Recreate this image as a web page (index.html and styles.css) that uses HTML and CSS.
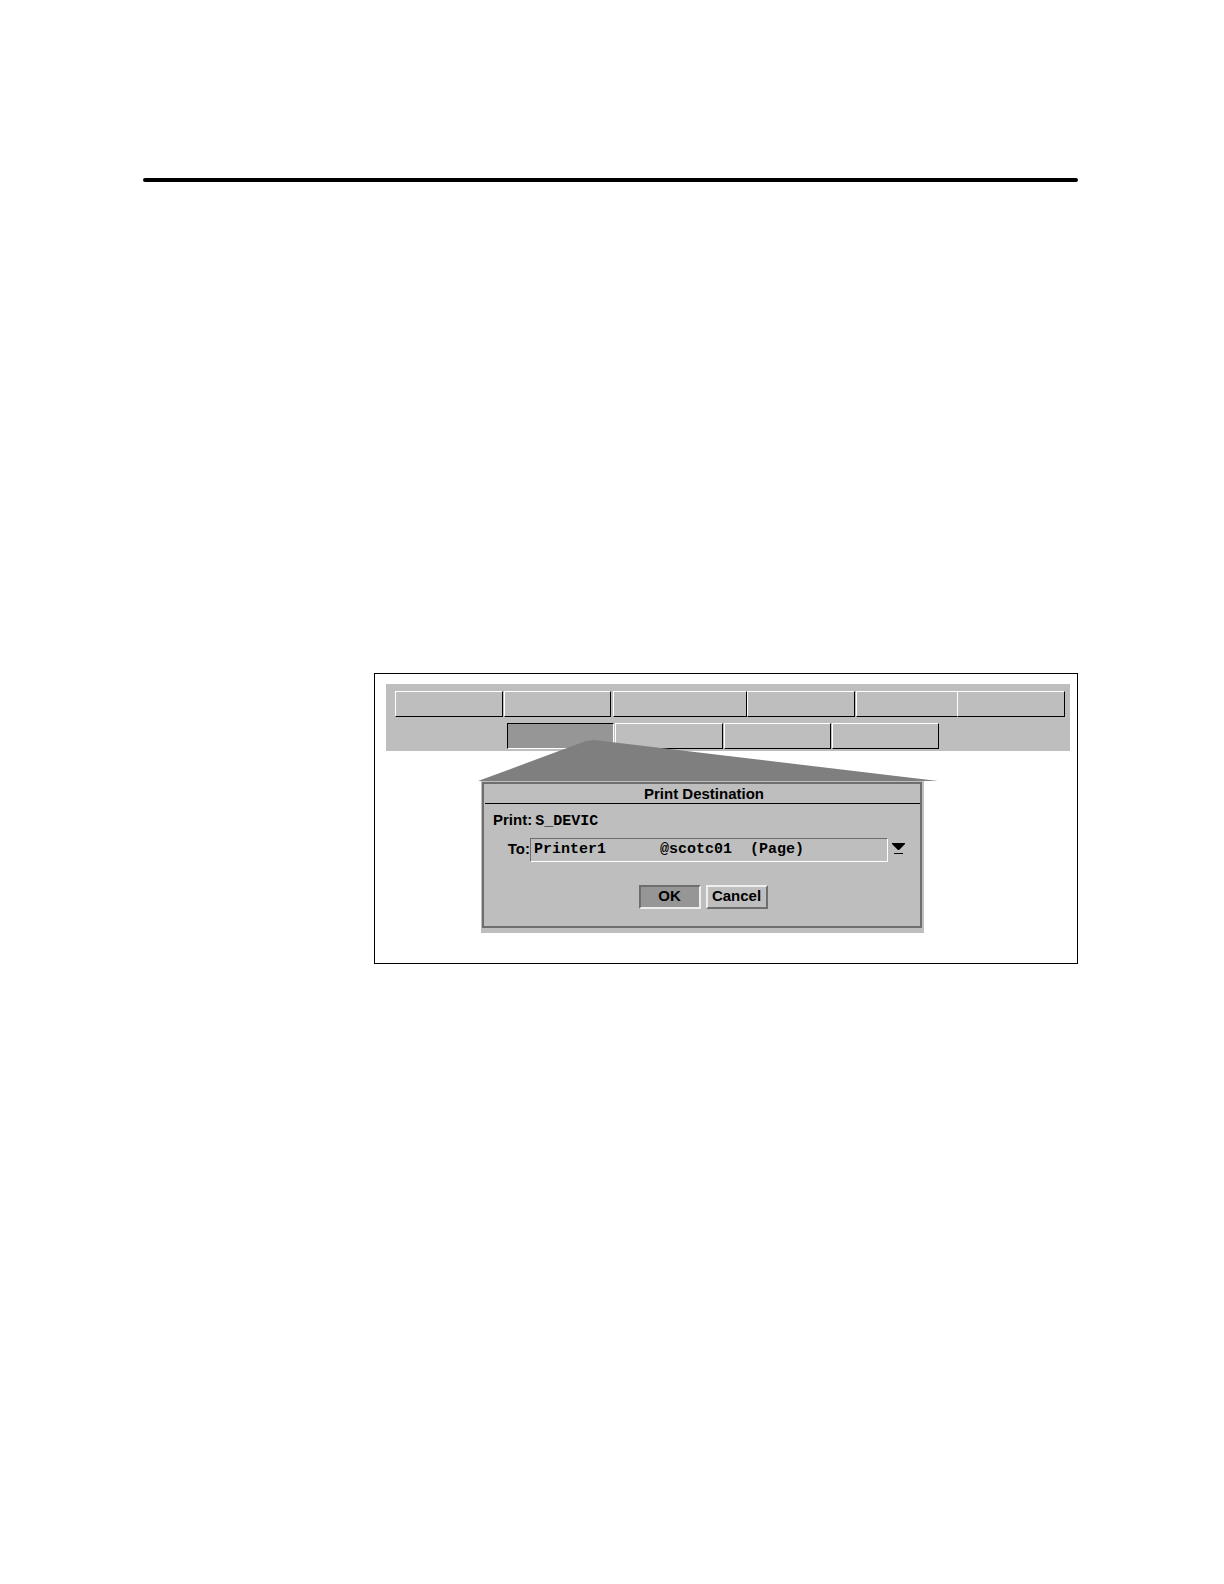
FILE: index.html
```
<!DOCTYPE html>
<html lang="en">

<head>
    <meta charset="utf-8">
    <title>Print Destination</title>
    <link rel="stylesheet" href="styles.css">
</head>

<body>
    <hr class="rule">
    <main class="figure">
        <div class="toolbar">
            <div class="row">
                <button type="button" class="tool" aria-label="Tool 1"></button>
                <button type="button" class="tool group-end" aria-label="Tool 2"></button>
                <button type="button" class="tool wide joined" aria-label="Tool 3"></button>
                <button type="button" class="tool" aria-label="Tool 4"></button>
                <button type="button" class="tool short joined" aria-label="Tool 5"></button>
                <button type="button" class="tool joined" aria-label="Tool 6"></button>
            </div>
            <div class="row second">
                <button type="button" class="tool pressed" aria-label="Print"></button>
                <button type="button" class="tool" aria-label="Tool 7"></button>
                <button type="button" class="tool" aria-label="Tool 8"></button>
                <button type="button" class="tool" aria-label="Tool 9"></button>
            </div>
        </div>

        <div class="popup">
            <!-- pointer from the pressed button to the dialog -->
            <svg class="pointer" viewBox="0 0 460 41" preserveAspectRatio="none" aria-hidden="true">
                <path d="M0 41 L108 1 L116 0 L460 41 Z" fill="#7f7f7f" />
            </svg>
            <form class="dialog">
                <h1>Print Destination</h1>
                <div class="source">
                    <span>Print:</span>
                    <output>S_DEVIC</output>
                </div>
                <div class="destination">
                    <label for="printer">To:</label>
                    <input type="text" id="printer" value="Printer1      @scotc01  (Page)">
                    <button type="button" class="pick" aria-label="Choose printer">
                        <svg width="13" height="12" viewBox="0 0 13 12">
                            <path d="M0 0 H13 V1 L7 7 H6 L0 1 Z M2 10 H11 V11 H2 Z" />
                        </svg>
                    </button>
                </div>
                <div class="actions">
                    <button type="button" class="action pressed">OK</button>
                    <button type="button" class="action">Cancel</button>
                </div>
            </form>
        </div>
    </main>
</body>

</html>
```
FILE: styles.css
```
* {
    box-sizing: border-box;
}

body {
    margin: 0;
    padding: 178px 146px 40px 143px;
    background: #fff;
    color: #000;
    font: bold 15px/20px "Liberation Sans", Arial, sans-serif;
}

button,
input {
    margin: 0;
    padding: 0;
    font: inherit;
    color: inherit;
    border-radius: 0;
}

.rule {
    height: 4px;
    margin: 0;
    border: none;
    border-radius: 2px;
    background: #000;
}

.figure {
    margin: 491px 0 0 231px;
    padding: 10px 7px 30px 11px;
    border: 1px solid #000;
}

/* toolbar */
.toolbar {
    padding: 7px 5px 2px 9px;
    background: #bebebe;
}

.row {
    display: flex;
}

.row.second {
    margin: 6px 126px 0 112px;
}

.tool {
    flex: 107 1 0;
    height: 26px;
    margin-right: 1px;
    background: #bebebe;
    border: 1px solid #000;
    border-top-color: #fff;
    border-left-color: #fff;
}

.tool.wide {
    flex-grow: 134;
}

.tool.short {
    flex-grow: 102;
    border-right: none;
}

.tool.group-end {
    margin-right: 2px;
}

.tool.joined,
.tool:last-child {
    margin-right: 0;
}

.tool.pressed {
    background: #969696;
    border-color: #000 #fff #fff #000;
}

/* dialog */
.popup {
    position: relative;
    margin: 30px 146px 0 95px;
    padding: 1px 2px 5px 1px;
    background: #bebebe;
}

.pointer {
    position: absolute;
    left: -3px;
    bottom: 100%;
    width: calc(100% + 17px);
    height: 41px;
}

.dialog {
    padding-bottom: 17px;
    border: 2px solid #6e6e6e;
}

.dialog h1 {
    margin: 0 0 0 1px;
    padding: 1px 0 0 3px;
    border-bottom: 1px solid #000;
    font-size: 15px;
    line-height: 18px;
    text-align: center;
}

.source {
    display: flex;
    align-items: baseline;
    gap: 3px;
    padding: 6px 0 0 9px;
}

.source output,
.destination input {
    font-family: "Liberation Mono", "Courier New", monospace;
}

.destination {
    display: flex;
    align-items: center;
    margin-top: 6px;
    padding-right: 14px;
}

.destination label {
    width: 46px;
    padding-bottom: 2px;
    text-align: right;
}

.destination input {
    flex: 1;
    min-width: 0;
    height: 24px;
    padding: 0 0 1px 3px;
    background: #bebebe;
    border: 1px solid #6e6e6e;
    border-right-color: #fff;
    border-bottom-color: #fff;
}

.pick {
    width: 18px;
    height: 20px;
    padding: 0 0 2px 4px;
    background: none;
    border: none;
}

.pick svg {
    display: block;
}

.actions {
    display: flex;
    justify-content: center;
    gap: 5px;
    margin-top: 23px;
    padding-left: 2px;
}

.action {
    width: 62px;
    height: 24px;
    padding-bottom: 2px;
    line-height: 18px;
    background: #bebebe;
    border: 2px solid #6e6e6e;
    border-top-color: #eee;
    border-left-color: #eee;
}

.action.pressed {
    background: #969696;
    border-color: #6e6e6e #eee #eee #6e6e6e;
}
```
